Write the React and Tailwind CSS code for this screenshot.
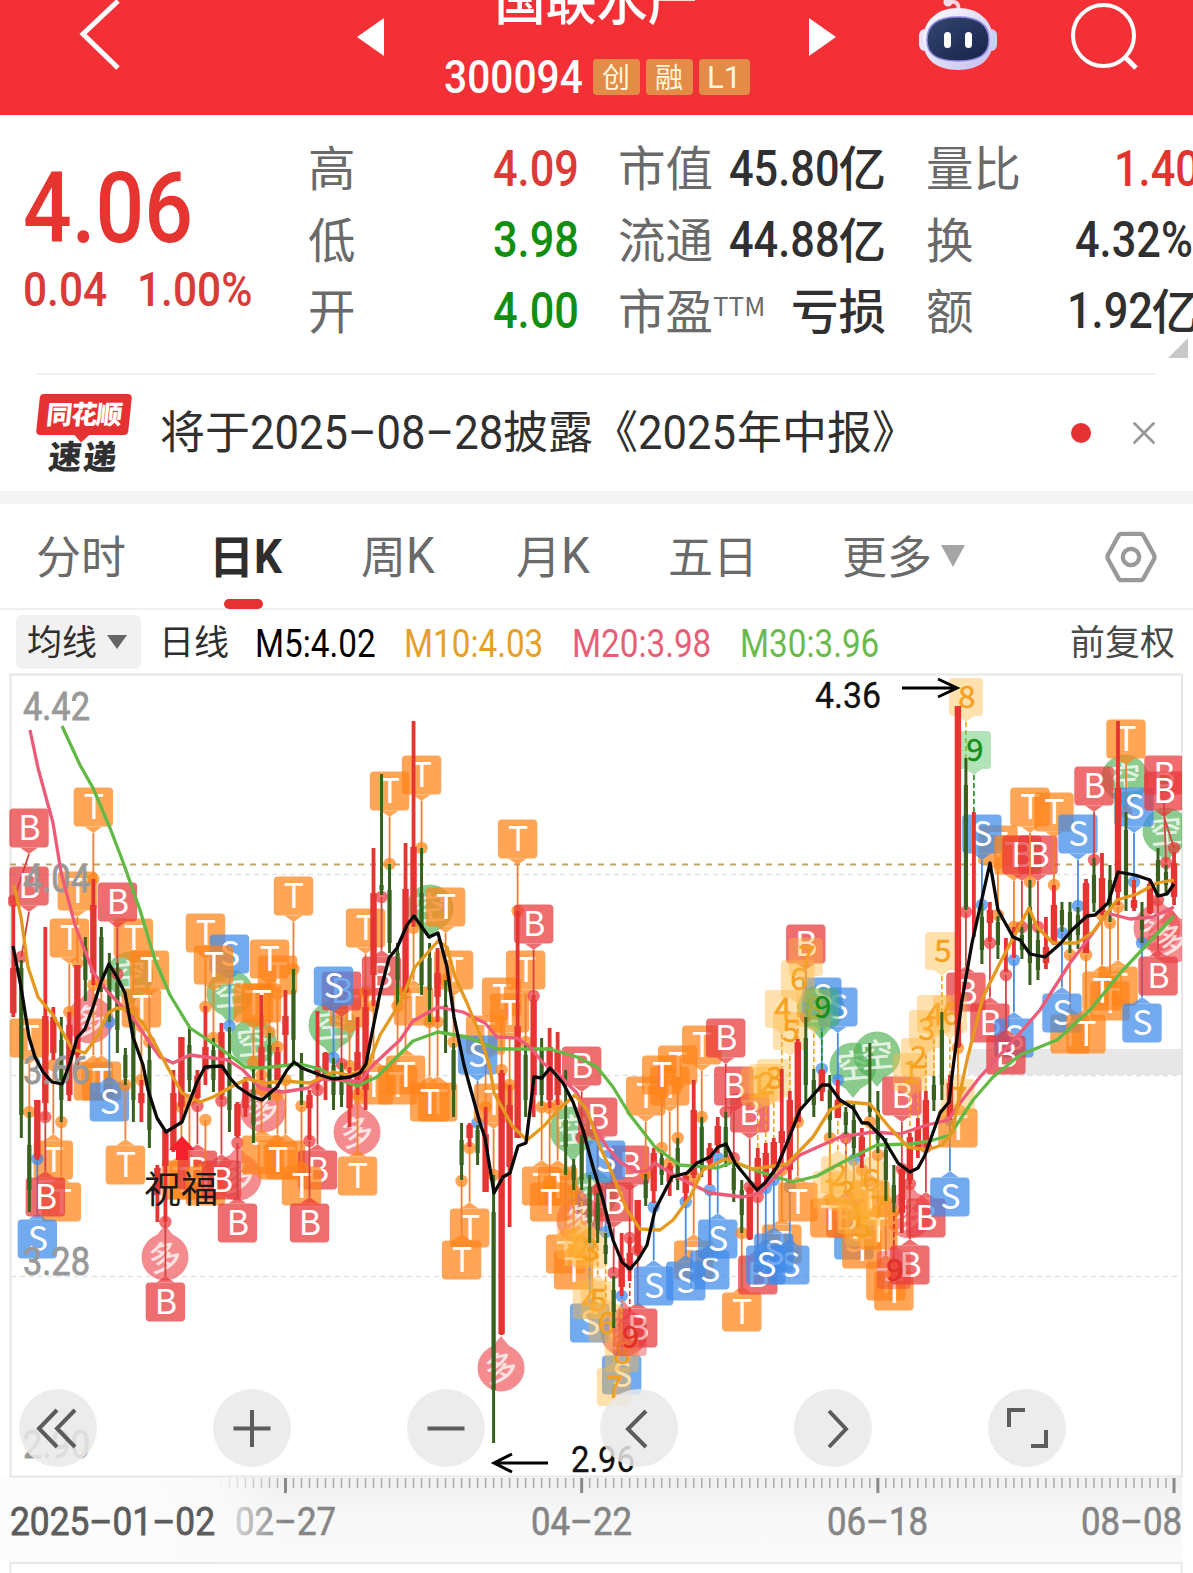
import { X } from 'lucide-react';

const RED = '#e63431';
const GREEN = '#38611d';

// [direction, high, body top, body bottom, low] in chart units, one entry per session
const candles = [
  ['r', 905, 968, 1013, 1017], ['g', 960, 968, 1115, 1138], ['g', 1112, 1145, 1190, 1212], ['r', 1100, 1100, 1158, 1160],
  ['r', 927, 1016, 1103, 1120], ['r', 1007, 1017, 1053, 1060], ['g', 1017, 1040, 1100, 1122], ['r', 1012, 1025, 1095, 1101],
  ['r', 965, 965, 1055, 1065], ['g', 937, 948, 980, 1001], ['r', 879, 905, 973, 985], ['g', 927, 937, 980, 992],
  ['g', 953, 965, 1012, 1022], ['g', 963, 983, 1030, 1053], ['g', 1048, 1055, 1078, 1085], ['g', 1012, 1030, 1100, 1122],
  ['r', 1080, 1093, 1103, 1122], ['g', 1043, 1060, 1130, 1148], ['r', 1165, 1168, 1195, 1222], ['r', 1130, 1130, 1166, 1222],
  ['r', 1070, 1093, 1150, 1152], ['r', 1037, 1037, 1107, 1123], ['g', 1028, 1045, 1080, 1092], ['r', 1070, 1076, 1098, 1103],
  ['r', 1006, 1047, 1070, 1085], ['g', 1038, 1050, 1080, 1092], ['r', 1023, 1032, 1095, 1100], ['g', 1027, 1060, 1110, 1132],
  ['r', 1102, 1104, 1136, 1138], ['r', 1077, 1082, 1108, 1117], ['g', 1067, 1090, 1125, 1143], ['r', 995, 1047, 1067, 1080],
  ['g', 1033, 1045, 1090, 1100], ['r', 1047, 1052, 1080, 1088], ['r', 990, 1016, 1035, 1067], ['g', 969, 990, 1040, 1065],
  ['g', 1053, 1065, 1090, 1105], ['r', 1090, 1095, 1108, 1140], ['r', 1011, 1066, 1074, 1090], ['r', 1052, 1053, 1075, 1100],
  ['g', 1058, 1065, 1095, 1110], ['g', 1063, 1070, 1095, 1107], ['r', 1067, 1080, 1108, 1127], ['r', 1017, 1052, 1085, 1095],
  ['r', 990, 1007, 1090, 1110], ['r', 848, 893, 975, 1006], ['g', 774, 885, 890, 895], ['g', 864, 890, 943, 953],
  ['g', 943, 953, 980, 1006], ['r', 843, 889, 992, 993], ['r', 721, 847, 917, 927], ['g', 848, 893, 985, 995],
  ['g', 943, 958, 990, 1022], ['r', 948, 973, 997, 1022], ['g', 980, 1005, 1035, 1053], ['g', 1043, 1050, 1090, 1117],
  ['g', 1123, 1140, 1165, 1180], ['r', 1123, 1125, 1138, 1147], ['g', 1125, 1130, 1153, 1165], ['r', 1107, 1134, 1192, 1192],
  ['g', 1175, 1212, 1390, 1443], ['r', 1070, 1073, 1334, 1335], ['r', 1085, 1105, 1167, 1227], ['r', 911, 1026, 1138, 1138],
  ['g', 1043, 1055, 1100, 1117], ['r', 995, 1000, 1095, 1117], ['g', 1038, 1050, 1095, 1106], ['r', 1028, 1047, 1100, 1108],
  ['r', 1032, 1050, 1095, 1105], ['g', 1070, 1120, 1147, 1175], ['g', 1159, 1165, 1180, 1190], ['g', 1135, 1140, 1180, 1190],
  ['g', 1175, 1187, 1223, 1243], ['g', 1193, 1203, 1230, 1243], ['g', 1233, 1245, 1254, 1264], ['g', 1276, 1290, 1312, 1328],
  ['r', 1233, 1258, 1287, 1296], ['r', 1237, 1253, 1270, 1281], ['r', 1200, 1200, 1253, 1254], ['g', 1174, 1180, 1198, 1206],
  ['r', 1148, 1153, 1191, 1203], ['g', 1150, 1158, 1175, 1185], ['r', 1163, 1166, 1182, 1196], ['g', 1138, 1148, 1180, 1190],
  ['r', 1172, 1176, 1193, 1202], ['r', 1080, 1110, 1175, 1178], ['g', 1117, 1127, 1167, 1177], ['r', 1143, 1148, 1163, 1185],
  ['r', 1117, 1126, 1145, 1153], ['g', 1112, 1127, 1157, 1167], ['g', 1160, 1168, 1190, 1202], ['g', 1180, 1190, 1215, 1233],
  ['r', 1187, 1187, 1239, 1240], ['r', 1148, 1158, 1185, 1192], ['r', 1143, 1153, 1177, 1187], ['r', 1138, 1142, 1167, 1177],
  ['r', 1069, 1131, 1143, 1167], ['r', 1091, 1100, 1170, 1183], ['r', 1039, 1042, 1122, 1122], ['g', 1017, 1038, 1085, 1102],
  ['g', 1069, 1080, 1105, 1117], ['r', 1069, 1070, 1092, 1101], ['g', 1075, 1090, 1120, 1138], ['r', 1080, 1100, 1118, 1118],
  ['g', 1107, 1112, 1125, 1135], ['g', 1104, 1120, 1148, 1158], ['r', 1128, 1137, 1157, 1168], ['g', 1043, 1105, 1112, 1117],
  ['g', 1091, 1110, 1140, 1153], ['g', 1138, 1150, 1180, 1201], ['g', 1165, 1185, 1203, 1212], ['r', 1169, 1169, 1213, 1233],
  ['r', 1133, 1137, 1180, 1184], ['r', 1118, 1127, 1148, 1158], ['r', 1091, 1100, 1143, 1147], ['g', 1076, 1085, 1100, 1111],
  ['g', 1012, 1030, 1085, 1100], ['r', 1075, 1083, 1117, 1120], ['r', 706, 706, 1047, 1048], ['g', 758, 785, 907, 910],
  ['r', 812, 860, 860, 937], ['g', 903, 917, 950, 964], ['r', 902, 910, 923, 942], ['g', 916, 922, 945, 959],
  ['r', 938, 950, 950, 972], ['r', 927, 937, 940, 958], ['g', 927, 935, 950, 959], ['g', 880, 907, 963, 985],
  ['g', 928, 940, 970, 980], ['r', 917, 947, 963, 969], ['r', 885, 905, 942, 945], ['g', 902, 910, 925, 932],
  ['g', 902, 912, 940, 953], ['g', 907, 915, 935, 949], ['r', 879, 883, 953, 953], ['g', 858, 875, 903, 912],
  ['r', 853, 878, 912, 915], ['g', 865, 880, 905, 922], ['r', 721, 788, 892, 905], ['g', 812, 830, 895, 911],
  ['r', 880, 900, 908, 911], ['g', 902, 915, 930, 943], ['r', 880, 884, 913, 914], ['g', 848, 860, 883, 897],
  ['g', 865, 872, 885, 895], ['r', 852, 863, 897, 905],
];

// [letter, session, label centre y, anchor y, label x when it is clamped to the frame]
const markers = [
  ['B', 0, 828, 901, 29], ['B', 1, 886, 957, 29], ['T', 8, 891, 963], ['T', 10, 807, 879], ['T', 7, 938, 1012],
  ['T', 15, 938, 1012], ['T', 16, 1008, 1080], ['T', 17, 970, 1042], ['B', 13, 902, 974], ['T', 2, 1038, 1112],
  ['T', 10, 1081, 985], ['T', 11, 1081, 983], ['S', 12, 1102, 1022], ['T', 5, 1160, 1065], ['T', 6, 1202, 1122],
  ['S', 3, 1239, 1159], ['B', 4, 1197, 1117], ['T', 14, 1165, 1085], ['B', 19, 1302, 1222], ['T', 24, 933, 1007],
  ['S', 27, 954, 1026], ['T', 25, 965, 1038], ['T', 33, 975, 1047], ['T', 32, 959, 1032], ['T', 30, 1003, 1062],
  ['T', 31, 1003, 1075], ['T', 35, 896, 969], ['T', 21, 1180, 1107], ['T', 22, 1180, 1100], ['B', 23, 1170, 1106],
  ['T', 24, 1186, 1120], ['B', 26, 1180, 1101], ['B', 28, 1223, 1143], ['T', 31, 1155, 1090], ['T', 34, 1160, 1080],
  ['T', 33, 1160, 1095], ['B', 38, 1170, 1090], ['T', 36, 1186, 1106], ['B', 37, 1223, 1141], ['T', 42, 1008, 1066],
  ['B', 41, 991, 1064], ['S', 40, 986, 1058], ['T', 44, 928, 992], ['B', 46, 976, 897], ['T', 47, 791, 864],
  ['T', 51, 775, 848], ['T', 50, 1006, 928], ['T', 54, 907, 980], ['T', 55, 970, 1042], ['T', 43, 1176, 1095],
  ['T', 45, 1085, 1006], ['T', 48, 1085, 1006], ['T', 49, 1075, 993], ['T', 53, 1102, 1022], ['T', 52, 1102, 1022],
  ['T', 59, 1035, 1107], ['S', 58, 1055, 1123], ['T', 60, 1103, 1175], ['T', 57, 1228, 1148], ['T', 56, 1260, 1181],
  ['T', 61, 997, 1070], ['T', 62, 1013, 1085], ['T', 64, 970, 1042], ['T', 63, 839, 911], ['B', 65, 924, 996],
  ['B', 71, 1066, 1138], ['B', 73, 1117, 1190], ['T', 66, 1186, 1107], ['T', 68, 1186, 1105], ['T', 67, 1202, 1108],
  ['B', 77, 1165, 1238], ['S', 74, 1160, 1232], ['B', 75, 1202, 1273], ['T', 69, 1254, 1175], ['T', 70, 1270, 1190],
  ['S', 72, 1323, 1243], ['S', 76, 1375, 1296], ['B', 78, 1328, 1250], ['S', 80, 1286, 1207], ['T', 85, 1260, 1177],
  ['S', 84, 1281, 1202], ['S', 87, 1270, 1190], ['S', 88, 1239, 1158], ['T', 79, 1096, 1174], ['T', 82, 1086, 1163],
  ['T', 83, 1065, 1138], ['T', 81, 1075, 1148], ['T', 86, 1045, 1117], ['B', 89, 1038, 1112], ['B', 92, 1113, 1187],
  ['B', 90, 1086, 1158], ['T', 91, 1312, 1233], ['B', 93, 1275, 1197], ['T', 96, 1244, 1170], ['S', 97, 1265, 1187],
  ['S', 95, 1253, 1180], ['S', 94, 1265, 1188], ['T', 98, 1202, 1122], ['B', 99, 944, 1017], ['S', 103, 1007, 1080],
  ['S', 101, 997, 1069], ['S', 105, 1240, 1160], ['B', 104, 1218, 1138], ['T', 102, 1218, 1138], ['T', 106, 1249, 1170],
  ['T', 107, 1200, 1122], ['T', 108, 1230, 1155], ['T', 109, 1281, 1201], ['T', 110, 1291, 1212], ['B', 112, 1265, 1184],
  ['B', 114, 1218, 1147], ['B', 111, 1096, 1169], ['S', 117, 1197, 1120], ['T', 118, 1128, 1048], ['T', 123, 845, 915],
  ['S', 121, 834, 905], ['B', 119, 992, 912], ['B', 122, 1023, 943], ['S', 125, 1038, 960], ['B', 124, 1055, 975],
  ['T', 125, 855, 927], ['B', 126, 855, 927], ['B', 128, 855, 927], ['T', 127, 807, 882], ['T', 130, 812, 885],
  ['S', 133, 834, 906], ['T', 132, 1034, 955], ['S', 131, 1013, 933], ['T', 134, 1034, 955], ['T', 138, 986, 907],
  ['T', 137, 1001, 923], ['T', 136, 991, 915], ['B', 135, 786, 860], ['T', 139, 739, 812], ['S', 140, 807, 882],
  ['S', 141, 1023, 943], ['B', 143, 976, 900], ['B', 144, 775, 863, 1164], ['B', 145, 791, 848, 1164],
];

// [digit, session, label centre y, anchor y, tone]
const counts = [
  ['1', 70, 1240, 1190], ['2', 71, 1247, 1190], ['3', 72, 1250, 1243], ['4', 72, 1300, 1243], ['5', 73, 1300, 1243],
  ['6', 74, 1323, 1264], ['7', 75, 1387, 1328], ['8', 76, 1353, 1296], ['9', 77, 1337, 1281, 'red'],
  ['1', 93, 1086, 1148], ['2', 94, 1083, 1143], ['3', 95, 1078, 1138], ['4', 96, 1009, 1069], ['5', 97, 1031, 1091],
  ['6', 98, 979, 1039], ['7', 99, 957, 1017], ['8', 100, 1008, 1069], ['9', 101, 1007, 1069, 'green'],
  ['1', 102, 1190, 1138], ['2', 103, 1175, 1118], ['3', 104, 1192, 1135], ['4', 105, 1215, 1158], ['5', 106, 1227, 1168],
  ['6', 107, 1180, 1117], ['7', 108, 1207, 1153], ['9', 110, 1270, 1212, 'red'],
  ['1', 112, 1072, 1133], ['2', 113, 1057, 1118], ['3', 114, 1029, 1091], ['4', 115, 1014, 1076], ['5', 116, 951, 1012],
  ['6', 117, 1014, 1075], ['7', 118, 1098, 1048], ['8', 119, 697, 758], ['9', 120, 750, 812, 'green'],
];

// [glyph, x, y]
const seals = [
  ['空', 130, 975], ['多', 90, 1020], ['多', 165, 1257], ['空', 230, 993], ['空', 253, 1042], ['多', 238, 1177],
  ['多', 263, 1109], ['空', 332, 1025], ['多', 357, 1132], ['空', 430, 908], ['多', 501, 1368], ['空', 573, 1130],
  ['空', 593, 1195], ['多', 580, 1220], ['多', 624, 1333], ['空', 821, 1008], ['空', 853, 1066], ['空', 877, 1055],
  ['多', 909, 1215], ['空', 1125, 778], ['空', 1166, 831], ['多', 1157, 928], ['多', 1171, 940],
];

const averages = [
  { color: '#62b946', points: '62,726 80,765 93,788 110,828 123,862 140,910 155,960 170,995 190,1028 220,1048 245,1067 262,1068 290,1065 300,1064 320,1069 340,1080 357,1086 377,1077 387,1067 413,1041 438,1032 467,1037 497,1049 550,1049 577,1057 597,1067 613,1087 630,1115 655,1147 680,1165 717,1168 733,1162 757,1171 793,1182 817,1176 843,1162 877,1145 910,1144 930,1141 950,1135 973,1100 993,1077 1020,1055 1057,1040 1090,1010 1123,970 1174,916' },
  { color: '#ee5b78', points: '30,730 38,768 53,823 61,872 75,925 93,972 108,992 133,1018 150,1043 160,1057 173,1063 190,1055 228,1060 243,1070 260,1088 283,1092 308,1088 322,1079 345,1080 360,1082 370,1068 387,1052 400,1040 413,1021 438,1007 463,1012 485,1023 497,1037 517,1038 530,1047 543,1063 557,1073 577,1093 590,1120 607,1147 620,1162 637,1172 648,1170 655,1163 677,1177 710,1193 743,1197 760,1193 780,1172 800,1155 840,1137 873,1132 900,1134 927,1125 948,1120 960,1103 980,1077 1020,1033 1040,1010 1070,963 1095,930 1107,913 1130,919 1153,917 1174,907' },
  { color: '#e5991f', points: '14,885 21,917 28,967 38,997 53,1015 72,1049 85,1053 97,1037 108,1013 117,1008 130,1010 143,1023 153,1040 168,1068 182,1093 200,1102 213,1097 233,1086 247,1079 267,1083 283,1081 310,1083 333,1072 350,1075 367,1068 380,1035 400,1003 415,967 438,941 447,947 455,977 467,1003 480,1035 490,1068 494,1093 513,1127 527,1140 543,1127 558,1110 575,1095 587,1110 600,1147 612,1173 627,1210 640,1229 660,1230 673,1220 690,1197 703,1170 725,1159 737,1163 753,1169 767,1167 787,1164 813,1137 830,1110 847,1102 870,1104 890,1128 908,1147 927,1150 942,1145 952,1133 960,1093 967,1060 983,997 1000,963 1029,908 1037,927 1053,943 1077,943 1093,932 1117,900 1137,894 1157,883 1174,880' },
  { color: '#0a0a0a', points: '13,946 21,987 29,1037 35,1057 43,1072 52,1082 62,1084 70,1063 77,1038 85,1029 93,1007 101,982 109,964 117,977 125,993 133,1037 143,1065 148,1090 157,1118 166,1132 182,1122 197,1082 205,1067 222,1066 230,1078 238,1087 253,1097 262,1100 277,1087 287,1070 294,1062 302,1068 320,1075 333,1079 350,1077 360,1073 366,1064 372,1033 380,993 389,958 397,948 407,925 414,916 429,937 438,933 447,967 454,1017 464,1065 470,1087 480,1123 485,1138 494,1193 503,1177 510,1173 518,1146 526,1143 534,1077 542,1078 550,1068 563,1083 573,1102 583,1130 593,1167 603,1200 613,1240 622,1262 630,1269 638,1260 647,1245 655,1210 672,1177 687,1173 697,1163 710,1157 718,1147 726,1144 735,1163 757,1190 765,1183 777,1167 787,1143 800,1110 822,1085 829,1085 840,1100 853,1108 862,1123 868,1123 883,1138 898,1163 910,1172 918,1168 925,1155 940,1113 949,1102 953,1068 962,1000 972,943 990,863 998,910 1013,937 1020,940 1030,954 1045,957 1060,944 1072,930 1087,916 1095,915 1108,903 1118,872 1135,875 1150,880 1158,896 1167,894 1174,884' },
];

const tones = {
  B: { fill: '#e8393c', line: '#cf4543', text: '#fff' },
  T: { fill: '#ff8419', line: '#ee8035', text: '#fff' },
  S: { fill: '#3f8bea', line: '#4a8bdd', text: '#fff' },
};

const countTones = {
  orange: { fill: '#ffb840', text: '#f5a01f' },
  red: { fill: '#e8393c', text: '#e03028' },
  green: { fill: '#4bbf55', text: '#159018' },
};

const priceLabels = [
  ['4.42', 720], ['4.04', 892], ['3.66', 1084], ['3.28', 1275], ['2.90', 1458],
];

const quotes = [
  [
    { label: '高', value: '4.09', width: 'w-[85px]', color: 'text-[#dc3a37]' },
    { label: '低', value: '3.98', width: 'w-[85px]', color: 'text-[#128f12]' },
    { label: '开', value: '4.00', width: 'w-[85px]', color: 'text-[#128f12]' },
  ],
  [
    { label: '市值', value: '45.80', width: 'w-[110px]', unit: '亿', color: 'text-[#303030]' },
    { label: '流通', value: '44.88', width: 'w-[110px]', unit: '亿', color: 'text-[#303030]' },
    { label: '市盈', sup: 'TTM', unit: '亏损', color: 'text-[#303030]' },
  ],
  [
    { label: '量比', value: '1.40', width: 'w-[85px]', color: 'text-[#e03431]' },
    { label: '换', value: '4.32%', width: 'w-[124px]', color: 'text-[#303030]' },
    { label: '额', value: '1.92', width: 'w-[85px]', unit: '亿', color: 'text-[#303030]' },
  ],
];

const cx = (i) => 13.3 + i * 8.005;

// Narrow numerals: the glyphs are squeezed inside a box of the wanted width.
function Narrow({ children, className = '', scale = 'scale-x-[0.875]' }) {
  return (
    <span className={`inline-block shrink-0 whitespace-nowrap font-[Roboto,sans-serif] ${className}`}>
      <span className={`inline-block origin-left ${scale}`}>{children}</span>
    </span>
  );
}

function Label({ x, y, w, size = 38, fill, children, bold = 0.3 }) {
  return (
    <text
      x={x}
      y={y}
      textLength={w}
      lengthAdjust="spacingAndGlyphs"
      fontSize={size}
      fill={fill}
      stroke={fill}
      strokeWidth={bold}
      fontFamily="Roboto, sans-serif"
    >
      {children}
    </text>
  );
}

function Marker({ data }) {
  const [kind, i, y, dot, boxX] = data;
  const tone = tones[kind];
  const ax = cx(i);
  const x = boxX ?? ax;
  const down = dot > y;
  const tip = down ? y + 26 : y - 26;
  const base = down ? y + 19.5 : y - 19.5;
  return (
    <g>
      <line x1={x} y1={tip} x2={ax} y2={dot} stroke={tone.line} strokeWidth="1.8" />
      <circle cx={ax} cy={dot} r="6.2" fill={tone.fill} opacity="0.72" />
      <g opacity="0.73">
        <rect x={x - 19.7} y={y - 19.6} width="39.4" height="39.2" rx="4" fill={tone.fill} />
        <polygon points={`${x - 9},${base} ${x},${tip} ${x + 9},${base}`} fill={tone.fill} />
      </g>
      <text x={x + 0.5} y={y + 11.5} fontSize="34" textAnchor="middle" fill={tone.text} fontFamily="Noto Sans CJK SC, sans-serif">
        {kind}
      </text>
    </g>
  );
}

function Count({ data }) {
  const [digit, i, y, dot, tone = 'orange'] = data;
  const { fill, text } = countTones[tone];
  const x = cx(i);
  const down = dot > y;
  const tip = down ? y + 25 : y - 25;
  const base = down ? y + 19 : y - 19;
  return (
    <g>
      <line x1={x} y1={tip} x2={x} y2={dot} stroke={text} strokeWidth="1.6" strokeDasharray="5 3" />
      <g opacity="0.42">
        <rect x={x - 17} y={y - 19} width="34" height="38" rx="4" fill={fill} />
        <polygon points={`${x - 8},${base} ${x},${tip} ${x + 8},${base}`} fill={fill} />
      </g>
      <text x={x + 1} y={y + 11} fontSize="31" textAnchor="middle" fill={text} stroke={text} strokeWidth="0.5" fontFamily="Noto Sans CJK SC, sans-serif">
        {digit}
      </text>
    </g>
  );
}

function Seal({ data }) {
  const [glyph, x, y] = data;
  const isLong = glyph === '多';
  const fill = isLong ? '#ee4b50' : '#4caf50';
  const s = isLong ? -1 : 1;
  return (
    <g>
      <g opacity="0.64">
        <circle cx={x} cy={y} r="23.5" fill={fill} />
        <polygon points={`${x - 9},${y + s * 21} ${x},${y + s * 32} ${x + 9},${y + s * 21}`} fill={fill} />
      </g>
      <text
        x={x}
        y={y + 12}
        fontSize="33"
        fontWeight="500"
        textAnchor="middle"
        fill="#fff"
        opacity="0.75"
        fontFamily="Noto Sans CJK SC, sans-serif"
        transform={`rotate(${isLong ? -12 : -5} ${x} ${y})`}
      >
        {glyph}
      </text>
    </g>
  );
}

function Candle({ data, i }) {
  const [dir, high, top, bottom, low] = data;
  const x = cx(i);
  const red = dir === 'r';
  const color = red ? RED : GREEN;
  const wick = red ? 3.8 : 3;
  const body = red ? 6.4 : 4.2;
  return (
    <g fill={color}>
      <rect x={x - wick / 2} y={high} width={wick} height={low - high} />
      <rect x={x - body / 2} y={top} width={body} height={bottom - top} />
    </g>
  );
}

function Chart() {
  return (
    <svg className="block h-[806px] w-[1193px]" viewBox="0 672 1193 806">
      <defs>
        <clipPath id="frame">
          <rect x="8" y="675" width="1174" height="801" />
        </clipPath>
      </defs>
      <rect x="10.5" y="674.5" width="1171.5" height="802" fill="#fff" stroke="#e6e6e6" strokeWidth="2" />
      <rect x="968" y="1049" width="214" height="26" fill="#e7e7e7" />
      {[874.5, 1075.5, 1276.5].map((y) => (
        <line key={y} x1="11" x2="1182" y1={y} y2={y} stroke="#e2e2e2" strokeWidth="1.5" strokeDasharray="5 4" />
      ))}
      <line x1="10" x2="1182" y1="864.5" y2="864.5" stroke="#c2a36a" strokeWidth="2" strokeDasharray="6 6" />

      <g clipPath="url(#frame)">
        {seals.map((s, k) => <Seal key={k} data={s} />)}
        {markers.map((m, k) => <Marker key={k} data={m} />)}
        {counts.map((c, k) => <Count key={k} data={c} />)}
        {candles.map((c, i) => <Candle key={i} data={c} i={i} />)}
      </g>

      {priceLabels.map(([text, y]) => (
        <Label key={text} x={23} y={y} w={67} fill="#999" bold={0.8}>{text}</Label>
      ))}

      {averages.map((a) => (
        <polyline key={a.color} points={a.points} fill="none" stroke={a.color} strokeWidth="3.3" strokeLinejoin="round" />
      ))}

      <path d="M182 1136l13 14h-7v10h-12v-10h-7z" fill="#f5222d" />
      <text x="144" y="1203" fontSize="37" fill="#1a1a1a" fontFamily="Noto Sans CJK SC, sans-serif">祝福</text>

      <g stroke="#000" strokeWidth="3" fill="none">
        <path d="M902 688h54M938 679l19 9-19 9" />
        <path d="M548 1463h-54M512 1454l-18 9 18 9" />
      </g>
      <Label x={815} y={708} w={66} size={36} fill="#111">4.36</Label>
      <Label x={571} y={1472} w={64} size={36} fill="#111">2.96</Label>
    </svg>
  );
}

const controls = [
  'M56 21L38 39.500l18 18.500M38 21L20 39.500l18 18.500',
  'M39 21v37M20.500 39.500h37',
  'M20.500 39.500h37',
  'M46 22L28 40l18 18',
  'M35 22l17 18-17 18',
  'M21 38V21h16M43 57h15V41',
];

function Controls() {
  return (
    <div className="absolute left-[19px] top-[717px] flex gap-[115.800px]">
      {controls.map((d) => (
        <button key={d} className="h-[78px] w-[78px] rounded-full bg-[#e9e9e9]/85">
          <svg className="h-full w-full" viewBox="0 0 78 78" fill="none" stroke="#5c5c5c" strokeWidth="4">
            <path d={d} />
          </svg>
        </button>
      ))}
    </div>
  );
}

function TimeAxis() {
  const dates = [
    ['02-27', 235, 101], ['04-22', 531, 101], ['06-18', 827, 101], ['08-08', 1081, 101],
  ];
  return (
    <svg className="block h-[95px] w-[1193px]" viewBox="0 1478 1193 95">
      <defs>
        <linearGradient id="axisBg" x1="0" y1="0" x2="0" y2="1">
          <stop offset="0" stopColor="#efefef" />
          <stop offset="0.5" stopColor="#f8f8f8" />
          <stop offset="1" stopColor="#fafafa" />
        </linearGradient>
        <linearGradient id="axisFade" x1="0" y1="0" x2="1" y2="0">
          <stop offset="0.45" stopColor="#fcfcfc" />
          <stop offset="0.76" stopColor="#fafafa" stopOpacity="0.95" />
          <stop offset="1" stopColor="#fafafa" stopOpacity="0" />
        </linearGradient>
      </defs>
      <rect x="10" y="1478" width="1172" height="84" fill="url(#axisBg)" />
      {candles.map((_, i) => {
        const major = i === 34 || i === 71 || i === 108 || i === 145;
        return (
          <line
            key={i}
            x1={cx(i)}
            x2={cx(i)}
            y1="1477"
            y2={major ? 1493 : 1488}
            stroke={major ? '#888' : '#aaa'}
            strokeWidth={major ? 3 : 1.5}
          />
        );
      })}
      {dates.map(([text, x, w]) => (
        <Label key={text} x={x} y={1535} w={w} fill="#858585" bold={0.6}>{text.replace('-', '–')}</Label>
      ))}
      <rect x="0" y="1478" width="284" height="83" fill="url(#axisFade)" />
      <Label x={10} y={1535} w={205} fill="#5c5c5c" bold={0.8}>2025–01–02</Label>
      <rect x="10.500" y="1563" width="1171" height="14" fill="#fff" stroke="#e8e8e8" strokeWidth="2" />
    </svg>
  );
}

function Robot() {
  return (
    <svg className="h-[72px] w-[80px]" viewBox="0 0 80 72">
      <defs>
        <linearGradient id="shell" x1="0" y1="0" x2="1" y2="1">
          <stop offset="0" stopColor="#fff" />
          <stop offset="1" stopColor="#c3bdf0" />
        </linearGradient>
        <linearGradient id="visor" x1="0" y1="0" x2="1" y2="1">
          <stop offset="0" stopColor="#33466f" />
          <stop offset="1" stopColor="#18234b" />
        </linearGradient>
      </defs>
      <path d="M40 12C42 3 38 1 31 2" fill="none" stroke="#f3d3e6" strokeWidth="4" />
      <circle cx="30" cy="2" r="4.500" fill="#f6dbe9" />
      <rect x="1" y="29" width="14" height="22" rx="6" fill="#e9e2f8" />
      <rect x="65" y="29" width="14" height="22" rx="6" fill="#d3cdf5" />
      <path d="M40 8c21 0 35 13 35 32S62 70 40 70 5 59 5 40 19 8 40 8z" fill="url(#shell)" />
      <path d="M40 17c22 0 31 9 31 23s-9 21-31 21-31-7-31-21 9-23 31-23z" fill="url(#visor)" stroke="#8d86df" strokeWidth="1.5" />
      <rect x="26" y="32" width="7" height="16" rx="3.500" fill="#fff" />
      <rect x="47" y="32" width="7" height="16" rx="3.500" fill="#fff" />
    </svg>
  );
}

function Header() {
  return (
    <header className="flex h-[115px] items-start overflow-hidden bg-[#f23036] text-white">
      <svg className="ml-[78px] h-[72px] w-[44px]" viewBox="0 0 44 72" fill="none" stroke="#fff" strokeWidth="5">
        <path d="M40 1L5 34l35 34" />
      </svg>
      <svg className="ml-[235px] mt-[18px] h-[38px] w-[27px]" viewBox="0 0 27 38" fill="#fff">
        <path d="M27 0v38L0 19z" />
      </svg>
      <div className="flex w-[425px] flex-col items-center">
        <div className="-mt-[27px] h-[50px] whitespace-nowrap text-[51px] font-medium leading-[50px]">国联水产</div>
        <div className="mt-[29px] flex h-[50px] items-center gap-[6px]">
          <Narrow className="mr-[5px] w-[138px] text-[46.500px] font-medium leading-[50px]">300094</Narrow>
          {['创', '融'].map((tag) => (
            <span key={tag} className="flex h-[36px] w-[47px] items-center justify-center rounded bg-[#e38c48] pb-[2px] text-[28px] leading-none text-[#fff6dc]">
              {tag}
            </span>
          ))}
          <span className="flex h-[36px] w-[51px] items-center justify-center rounded bg-[#e38c48] font-[Roboto,sans-serif] text-[31px] leading-none text-[#fff6dc]">
            L1
          </span>
        </div>
      </div>
      <svg className="mt-[18px] h-[38px] w-[27px]" viewBox="0 0 27 38" fill="#fff">
        <path d="M0 0v38l27-19z" />
      </svg>
      <div className="ml-[82px]">
        <Robot />
      </div>
      <svg className="ml-[72px] h-[72px] w-[72px]" viewBox="0 0 72 72" fill="none" stroke="#fff" strokeWidth="4">
        <circle cx="33.500" cy="35.500" r="30.500" />
        <path d="M54 56l12 12" strokeWidth="5" />
      </svg>
    </header>
  );
}

function QuoteColumn({ rows, className }) {
  return (
    <div className={`flex shrink-0 flex-col pt-[19px] ${className}`}>
      {rows.map((row) => (
        <div key={row.label} className="flex h-[71.300px] items-center justify-between whitespace-nowrap text-[47.500px] leading-none">
          <span className="flex items-start pb-[7px] text-[#6a6a6a]">
            {row.label}
            {row.sup && <sup className="top-0 mt-[7px] text-[26px] leading-none">{row.sup}</sup>}
          </span>
          <span className={`flex items-center font-medium ${row.color}`}>
            {row.value && <Narrow className={`text-[49.500px] ${row.width}`}>{row.value}</Narrow>}
            {row.unit && <span className="pb-[7px]">{row.unit}</span>}
          </span>
        </div>
      ))}
    </div>
  );
}

function Quote() {
  return (
    <section className="relative flex h-[258px] overflow-hidden">
      <div className="w-[308px] shrink-0 pl-[23px] pt-[45px] font-medium text-[#e63431]">
        <Narrow className="text-[98px] leading-[98px]">4.06</Narrow>
        <div className="mt-[8px] flex text-[#d83b38]">
          <Narrow className="w-[114px] text-[48.500px] leading-[48px]">0.04</Narrow>
          <Narrow className="text-[48.500px] leading-[48px]">1.00%</Narrow>
        </div>
      </div>
      <QuoteColumn rows={quotes[0]} className="w-[270px]" />
      <QuoteColumn rows={quotes[1]} className="ml-[40px] w-[268px]" />
      <QuoteColumn rows={quotes[2]} className="ml-[40px] w-[273px]" />
      <svg className="absolute bottom-[15px] right-[5px] h-[20px] w-[20px]" viewBox="0 0 20 20" fill="#c9c9c9">
        <path d="M20 0v20H0z" />
      </svg>
    </section>
  );
}

function News() {
  return (
    <section className="mx-[36px] flex h-[118px] items-center border-t-2 border-[#f2f2f2] text-[#303030]">
      <div className="flex w-[96px] flex-col items-center">
        <div className="relative flex h-[41px] w-[92px] -skew-x-6 items-center justify-center rounded bg-[#e63132] pb-[3px] text-[26px] font-black leading-none tracking-[-1px] text-white">
          同花顺
          <span className="absolute -bottom-[5px] left-[40px] h-3 w-3 rotate-45 bg-[#e63132]" />
        </div>
        <div className="mt-[3px] -skew-x-6 text-[33px] font-black leading-[34px] tracking-[2px]">速递</div>
      </div>
      <div className="ml-[28px] flex items-center whitespace-nowrap text-[45px] leading-none">
        <span className="pb-[7px]">将于</span>
        <Narrow className="w-[253px] text-[48px]" scale="scale-x-[0.908]">2025–08–28</Narrow>
        <span className="pb-[7px]">披露《</span>
        <Narrow className="w-[99px] text-[48px]" scale="scale-x-[0.908]">2025</Narrow>
        <span className="pb-[7px]">年中报》</span>
      </div>
      <span className="ml-auto h-5 w-5 rounded-full bg-[#e63132]" />
      <X className="-mr-[6px] ml-[34px] h-[38px] w-[38px] text-[#9a9a9a]" strokeWidth={1.8} />
    </section>
  );
}

function Tabs() {
  return (
    <nav className="flex h-[106px] items-center whitespace-nowrap border-b-2 border-[#f0f0f0] pl-[36px] text-[45px] leading-none text-[#6a6a6a]">
      <span className="w-[173px] pb-[3px]">分时</span>
      <span className="relative flex h-full w-[152px] items-center font-bold text-[#2e2e2e]">
        <span className="pb-[3px]">日</span><Narrow className="text-[49px] leading-none" scale="scale-x-[0.9]">K</Narrow>
        <i className="absolute -bottom-[1px] left-[15px] h-[10px] w-[39px] rounded-full bg-[#e63132]" />
      </span>
      <span className="flex w-[155px] items-center"><span className="pb-[3px]">周</span><Narrow className="text-[50px]" scale="scale-x-[0.92]">K</Narrow></span>
      <span className="flex w-[152px] items-center"><span className="pb-[3px]">月</span><Narrow className="text-[50px]" scale="scale-x-[0.92]">K</Narrow></span>
      <span className="w-[174px] pb-[3px]">五日</span>
      <span className="pb-[3px]">更多</span>
      <svg className="ml-[9px] h-[22px] w-[24px]" viewBox="0 0 24 22" fill="#a5a5a5">
        <path d="M0 0h24L12 22z" />
      </svg>
      <svg className="ml-[138px] mt-[2px] h-[52px] w-[56px]" viewBox="0 0 56 54" fill="none" stroke="#999" strokeWidth="4.500" strokeLinejoin="round">
        <path d="M18 3h20q2 0 3 2l11 20q1 2 0 4L41 49q-1 2-3 2H18q-2 0-3-2L4 29q-1-2 0-4L15 5q1-2 3-2z" />
        <circle cx="28" cy="27" r="8.500" />
      </svg>
    </nav>
  );
}

function Legend() {
  return (
    <div className="flex h-[62px] items-center whitespace-nowrap pl-[16px] pt-[2px] text-[35px] leading-none text-[#2e2e2e]">
      <button className="mr-[18px] flex h-[54px] w-[125px] items-center gap-[10px] rounded-md bg-[#f1f1f1] pl-[11px]">
        <span className="pb-[5px]">均线</span>
        <svg className="h-[14px] w-[20px]" viewBox="0 0 20 14" fill="#666">
          <path d="M0 0h20L10 14z" />
        </svg>
      </button>
      <span className="w-[96px] pb-[5px]">日线</span>
      <Narrow className="w-[149px] pt-[3px] text-[38px] text-black">M5:4.02</Narrow>
      <Narrow className="w-[168px] pt-[3px] text-[38px] text-[#e5a028]">M10:4.03</Narrow>
      <Narrow className="w-[168px] pt-[3px] text-[38px] text-[#e75f76]">M20:3.98</Narrow>
      <Narrow className="pt-[3px] text-[38px] text-[#6bbb4c]">M30:3.96</Narrow>
      <span className="ml-auto mr-[18px] pb-[5px] text-[#4a4a4a]">前复权</span>
    </div>
  );
}

export default function App() {
  return (
    <div className="h-[1573px] w-[1193px] overflow-hidden bg-white font-['Noto_Sans_CJK_SC',sans-serif]">
      <Header />
      <Quote />
      <News />
      <div className="h-[13px] bg-[#f4f4f4]" />
      <Tabs />
      <Legend />
      <div className="relative">
        <Chart />
        <Controls />
      </div>
      <TimeAxis />
    </div>
  );
}
